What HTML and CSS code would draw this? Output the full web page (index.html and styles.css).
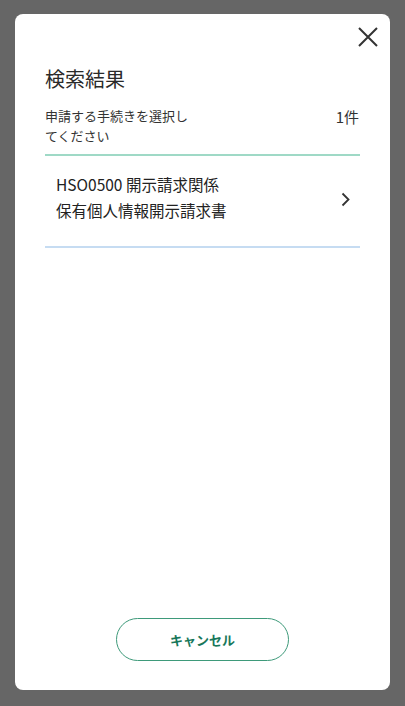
FILE: index.html
```html
<!DOCTYPE html>
<html lang="ja">
<head>
<meta charset="utf-8">
<title>検索結果</title>
<link rel="stylesheet" href="styles.css">
</head>
<body>
<div class="modal">
  <div class="close-row">
    <button class="close" aria-label="閉じる">
      <svg width="20" height="20" viewBox="0 0 20 20"><path d="M1 1L19 19M19 1L1 19" stroke="#333" stroke-width="2" fill="none"/></svg>
    </button>
  </div>
  <div class="content">
    <h1 class="title">検索結果</h1>
    <div class="summary">
      <p class="lead">申請する手続きを選択してください</p>
      <span class="count">1件</span>
    </div>
    <div class="item">
      <div class="item-text">
        <div>HSO0500 開示請求関係</div>
        <div>保有個人情報開示請求書</div>
      </div>
      <svg class="chevron" width="9" height="15" viewBox="0 0 9 15"><path d="M1.5 1.5L7.5 7.5L1.5 13.5" stroke="#333" stroke-width="1.8" fill="none"/></svg>
    </div>
  </div>
  <div class="footer">
    <button class="cancel">キャンセル</button>
  </div>
</div>
</body>
</html>
```

FILE: styles.css
```css
html, body {
  margin: 0;
  padding: 0;
  background: #666666;
}
body {
  font-family: "Noto Sans CJK JP", "Noto Sans", sans-serif;
  color: #333333;
  padding: 14px 15px 16px;
  box-sizing: border-box;
  height: 706px;
}
.modal {
  background: #ffffff;
  border-radius: 8px;
  height: 676px;
  box-sizing: border-box;
  display: flex;
  flex-direction: column;
}
.close-row {
  display: flex;
  justify-content: flex-end;
  padding: 13px 12px 0 0;
}
.close {
  border: 0;
  background: none;
  padding: 0;
  width: 20px;
  height: 20px;
  display: block;
}
.close svg { display: block; }
.content {
  padding: 18px 30px 0 30px;
  flex: 1;
}
.title {
  margin: 0;
  font-size: 20px;
  line-height: 28px;
  font-weight: 400;
  color: #2a2a2a;
}
.summary {
  display: flex;
  justify-content: space-between;
  align-items: flex-start;
  margin-top: 13px;
  padding-bottom: 8px;
  border-bottom: 2px solid #9fd9c6;
}
.lead {
  margin: 0;
  width: 150px;
  font-size: 13px;
  line-height: 20px;
}
.count {
  font-size: 15px;
  line-height: 20px;
  margin-top: 1px;
  padding-right: 1px;
}
.item {
  display: flex;
  align-items: center;
  justify-content: space-between;
  padding: 15px 10px 23px 11px;
  border-bottom: 2px solid #c6dcf2;
}
.item-text {
  font-size: 15.5px;
  line-height: 26px;
  color: #222;
}
.chevron {
  display: block;
  margin-top: 5px;
}
.footer {
  display: flex;
  justify-content: center;
  padding-bottom: 29px;
}
.cancel {
  width: 173px;
  height: 43px;
  border: 1px solid #3e9a7a;
  border-radius: 22px;
  background: #fff;
  color: #17775a;
  font-family: "Noto Sans CJK JP", "Noto Sans", sans-serif;
  font-size: 13px;
  font-weight: 700;
  padding: 0;
}
```
